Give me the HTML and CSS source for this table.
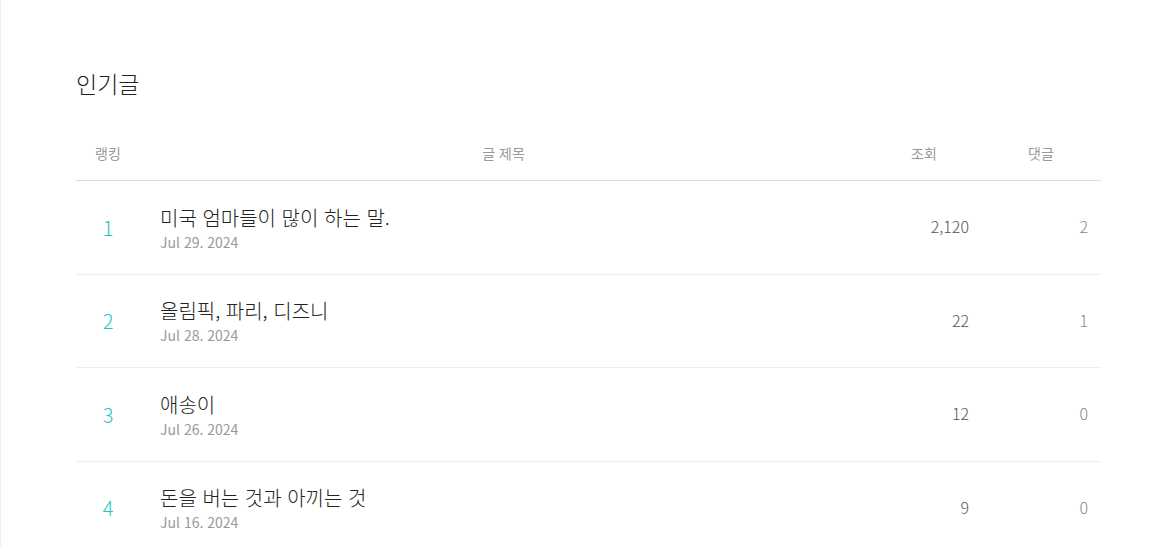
FILE: index.html
```html
<!DOCTYPE html>
<html lang="ko">

<head>
    <meta charset="UTF-8">
    <meta name="viewport" content="width=device-width, initial-scale=1.0">
    <title>인기글</title>
    <link rel="stylesheet" href="styles.css">
</head>

<body>
    <div class="pagina">
        <div class="contenedor">
            <h2 class="titulo">인기글</h2>

            <div class="tabla">
                <div class="fila cabecera">
                    <div class="col-rank">랭킹</div>
                    <div class="col-titulo">글 제목</div>
                    <div class="col-vistas">조회</div>
                    <div class="col-coment">댓글</div>
                </div>

                <div class="fila">
                    <div class="col-rank rank">1</div>
                    <div class="col-titulo">
                        <div class="post">미국 엄마들이 많이 하는 말.</div>
                        <div class="fecha">Jul 29. 2024</div>
                    </div>
                    <div class="col-vistas num">2,120</div>
                    <div class="col-coment num">2</div>
                </div>

                <div class="fila">
                    <div class="col-rank rank">2</div>
                    <div class="col-titulo">
                        <div class="post">올림픽, 파리, 디즈니</div>
                        <div class="fecha">Jul 28. 2024</div>
                    </div>
                    <div class="col-vistas num">22</div>
                    <div class="col-coment num">1</div>
                </div>

                <div class="fila">
                    <div class="col-rank rank">3</div>
                    <div class="col-titulo">
                        <div class="post">애송이</div>
                        <div class="fecha">Jul 26. 2024</div>
                    </div>
                    <div class="col-vistas num">12</div>
                    <div class="col-coment num">0</div>
                </div>

                <div class="fila">
                    <div class="col-rank rank">4</div>
                    <div class="col-titulo">
                        <div class="post">돈을 버는 것과 아끼는 것</div>
                        <div class="fecha">Jul 16. 2024</div>
                    </div>
                    <div class="col-vistas num">9</div>
                    <div class="col-coment num">0</div>
                </div>
            </div>
        </div>
    </div>
</body>

</html>
```

FILE: styles.css
```css
body {
    font-family: "Noto Sans CJK KR", "Noto Sans", sans-serif;
    margin: 0;
    padding: 0;
    background-color: #ffffff;
    color: #333333;
}

.pagina {
    border-left: 1px solid #eeeeee;
    min-height: 547px;
    box-sizing: border-box;
}

.contenedor {
    margin-left: 75px;
    width: 1025px;
    padding-top: 66px;
}

.titulo {
    margin: 0;
    font-size: 23px;
    font-weight: 300;
    line-height: 34px;
    color: #222222;
}

.tabla {
    margin-top: 30px;
}

.fila {
    display: grid;
    grid-template-columns: 64px 1fr 114px 120px;
    align-items: center;
    height: 93.5px;
    border-bottom: 1px solid #eeeeee;
    box-sizing: border-box;
}

.fila.cabecera {
    height: 51px;
    border-bottom: 1px solid #dddddd;
    font-size: 14px;
    color: #999999;
    padding-bottom: 4px;
}

.cabecera div {
    text-align: center;
}

.col-rank {
    text-align: center;
}

.col-titulo {
    padding-left: 20px;
    padding-top: 3px;
}

.cabecera .col-titulo {
    padding-left: 0;
    padding-top: 0;
}

.rank {
    font-size: 20px;
    font-weight: 300;
    color: #1fc6c0;
}

.post {
    font-size: 20px;
    font-weight: 300;
    line-height: 26px;
    color: #222222;
}

.fecha {
    font-size: 14px;
    line-height: 22px;
    color: #999999;
}

.num {
    text-align: right;
    font-size: 16px;
    font-weight: 300;
    color: #555555;
    padding-right: 12px;
    padding-bottom: 2px;
}

.col-coment.num {
    padding-right: 13px;
    color: #888888;
}
```
